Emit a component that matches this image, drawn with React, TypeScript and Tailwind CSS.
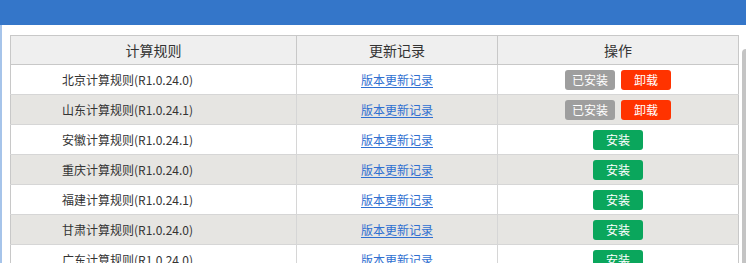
import React from "react";

type Row = { name: string; installed: boolean };

const rows: Row[] = [
  { name: "北京计算规则(R1.0.24.0)", installed: true },
  { name: "山东计算规则(R1.0.24.1)", installed: true },
  { name: "安徽计算规则(R1.0.24.1)", installed: false },
  { name: "重庆计算规则(R1.0.24.0)", installed: false },
  { name: "福建计算规则(R1.0.24.1)", installed: false },
  { name: "甘肃计算规则(R1.0.24.0)", installed: false },
  { name: "广东计算规则(R1.0.24.0)", installed: false },
];

const font = { fontFamily: '"Microsoft YaHei", "Noto Sans CJK SC", "Noto Sans", sans-serif' };

export default function App() {
  return (
    <div className="w-[746px] h-[263px] overflow-hidden bg-white text-[#333]" style={font}>
      <div className="h-[25px] bg-[#3476c9]" />
      <div className="flex h-[238px] border-l-[2px] border-[#a6c4ea] pl-[8px] pt-[10px]">
        <div className="w-[728px] shrink-0">
          <table className="w-[728px] table-fixed border-collapse border border-[#c8c8c8]">
            <colgroup>
              <col className="w-[286px]" />
              <col className="w-[201px]" />
              <col className="w-[241px]" />
            </colgroup>
            <thead>
              <tr className="h-[29px] bg-[#efefef]">
                <th className="border border-[#c8c8c8] text-[14px] font-normal text-[#333] p-0 leading-none">计算规则</th>
                <th className="border border-[#c8c8c8] text-[14px] font-normal text-[#333] p-0 leading-none">更新记录</th>
                <th className="border border-[#c8c8c8] text-[14px] font-normal text-[#333] p-0 leading-none">操作</th>
              </tr>
            </thead>
            <tbody>
              {rows.map((r, i) => (
                <tr key={i} className={`h-[30px] ${i % 2 === 1 ? "bg-[#e6e5e2]" : "bg-white"}`}>
                  <td className="border border-[#d6d6d6] border-l-[#c8c8c8] p-0 pl-[51px] text-[12px] leading-none text-[#333] whitespace-nowrap">
                    {r.name}
                  </td>
                  <td className="border border-[#d6d6d6] p-0 text-center text-[12px] leading-none">
                    <a className="text-[#2f6fd1] underline underline-offset-[2px]">版本更新记录</a>
                  </td>
                  <td className="border border-[#d6d6d6] border-r-[#c8c8c8] p-0">
                    <div className="flex justify-center gap-[6px]">
                      {r.installed ? (
                        <>
                          <span className="flex h-[20px] w-[50px] items-center justify-center rounded-[3px] bg-[#9e9e9e] text-[12px] leading-none text-white">已安装</span>
                          <span className="flex h-[20px] w-[50px] items-center justify-center rounded-[3px] bg-[#ff3300] text-[12px] leading-none text-white">卸载</span>
                        </>
                      ) : (
                        <span className="flex h-[20px] w-[50px] items-center justify-center rounded-[3px] bg-[#0aa65c] text-[12px] leading-none text-white">安装</span>
                      )}
                    </div>
                  </td>
                </tr>
              ))}
            </tbody>
          </table>
        </div>
        <div className="ml-[4px] mt-[14px] h-[250px] w-[8px] shrink-0 rounded-[4px] bg-[#c4c4c4]" />
      </div>
    </div>
  );
}
